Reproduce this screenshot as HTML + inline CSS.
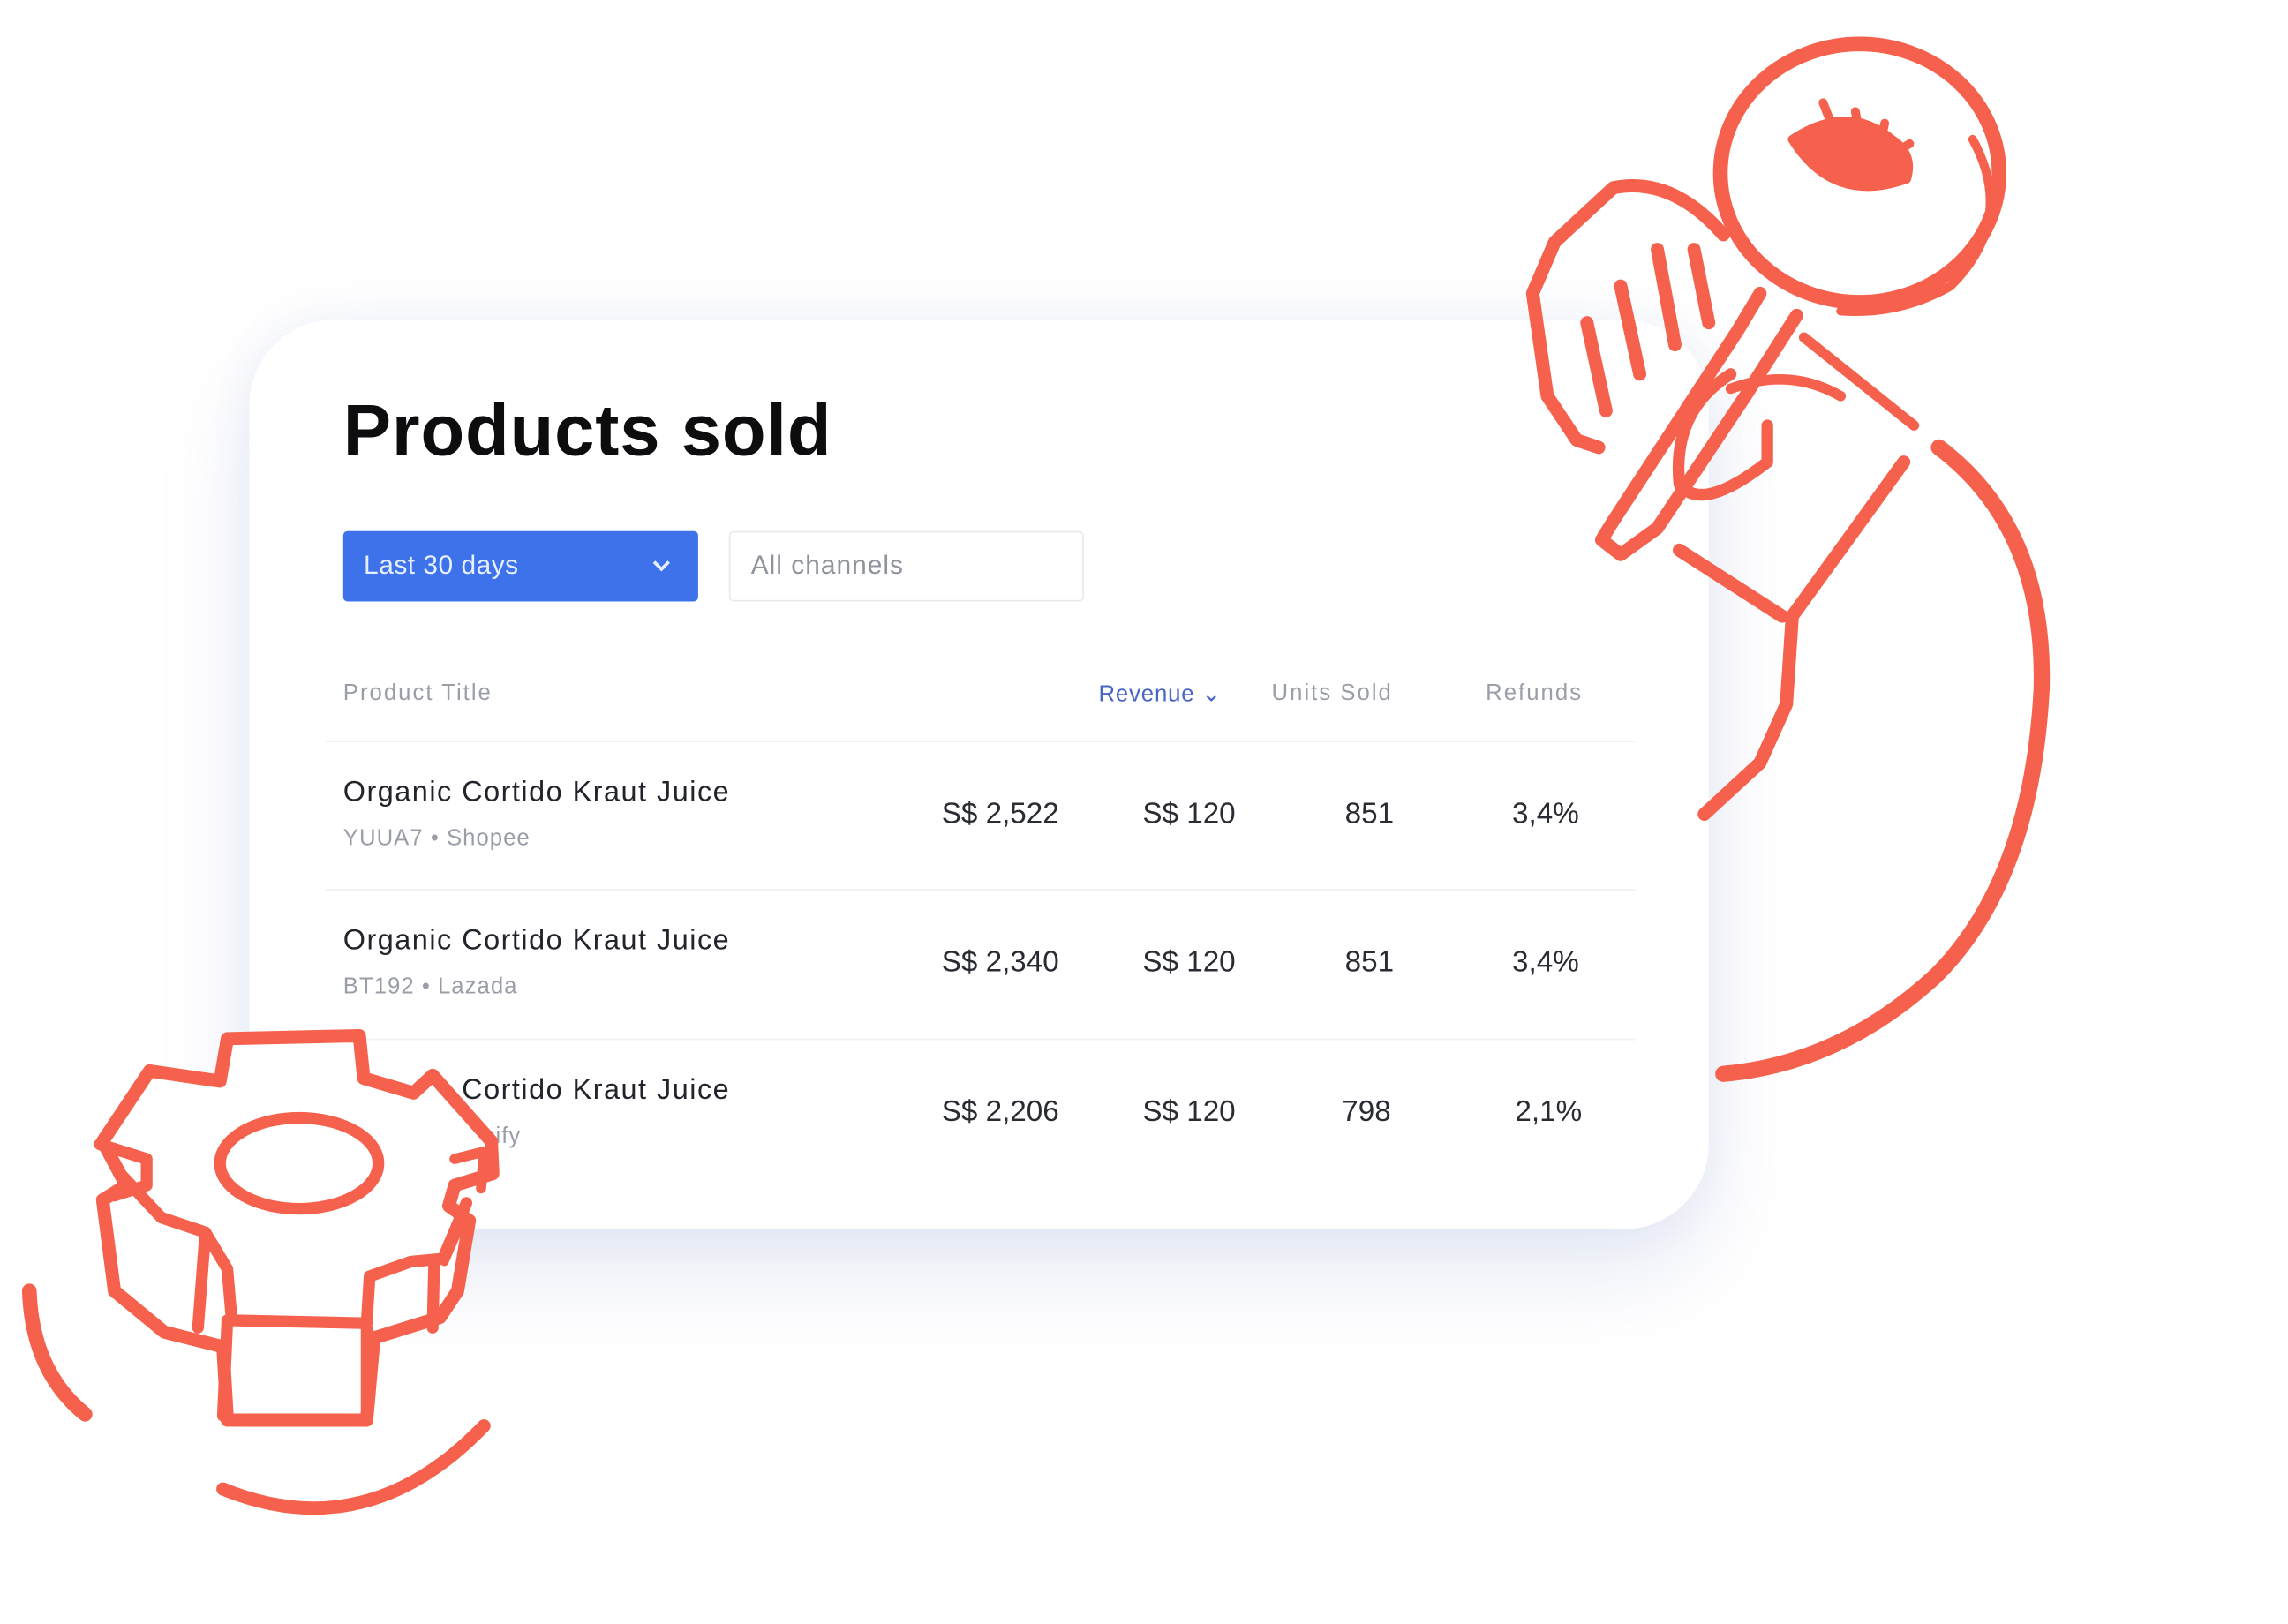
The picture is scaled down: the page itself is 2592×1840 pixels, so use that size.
<!DOCTYPE html>
<html><head><meta charset="utf-8"><style>
html,body{margin:0;padding:0;background:#fff;width:2592px;height:1840px;overflow:hidden}
#w{position:absolute;left:0;top:0;width:1560px;height:1107px;transform:scale(1.66154,1.66215);transform-origin:0 0;font-family:"Liberation Sans",sans-serif}
.card{position:absolute;left:170px;top:218px;width:995px;height:620px;background:#fff;border-radius:58px;box-shadow:0 30px 60px rgba(120,140,200,.18),0 0 30px rgba(150,165,210,.12)}
.t{position:absolute;white-space:nowrap}
.h{font-size:15.5px;color:#9a9ea8;letter-spacing:1.2px}
.n{font-size:20px;color:#2a2c33}
.p{font-size:19.5px;color:#22242b;letter-spacing:0.9px}
.s{font-size:15.5px;color:#9a9ea8;letter-spacing:0.6px}
.line{position:absolute;left:222px;width:893px;height:1px;background:#eef0f4}
svg{position:absolute;left:0;top:0}
</style></head><body><div id="w">
<div class="card"></div>
<div class="t" style="left:234px;top:266px;font-size:49px;font-weight:bold;color:#0d0d0f;letter-spacing:0.5px">Products sold</div>
<div style="position:absolute;left:234px;top:362px;width:242px;height:48px;background:#3e72ea;border-radius:3px"></div>
<div class="t" style="left:248px;top:375px;font-size:18px;color:#e6efff;letter-spacing:0.3px">Last 30 days</div>
<svg width="1560" height="1107" style="pointer-events:none"><path d="M446 383l5 5 5-5" stroke="#e6efff" stroke-width="2.2" fill="none"/><path d="M709 383l5 5 5-5" stroke="#9a9ea8" stroke-width="1.5" fill="none"/></svg>
<div style="position:absolute;left:497px;top:362px;width:240px;height:46px;border:1px solid #e7e9ee;border-radius:3px;background:#fff"></div>
<div class="t" style="left:512px;top:375px;font-size:18px;color:#8f939c;letter-spacing:0.6px">All channels</div>
<div class="t h" style="left:234px;top:464px">Product Title</div>
<div class="t h" style="left:749px;top:464px;color:#4a66c4;letter-spacing:0.5px">Revenue ⌄</div>
<div class="t h" style="left:867px;top:464px">Units Sold</div>
<div class="t h" style="left:1013px;top:464px">Refunds</div>
<div class="line" style="top:505px"></div>
<div class="line" style="top:606px"></div>
<div class="line" style="top:708px"></div>

<div class="t p" style="left:234px;top:529px">Organic Cortido Kraut Juice</div>
<div class="t s" style="left:234px;top:563px">YUUA7 • Shopee</div>
<div class="t n" style="left:642px;top:544px">S$ 2,522</div>
<div class="t n" style="left:779px;top:544px">S$ 120</div>
<div class="t n" style="left:917px;top:544px">851</div>
<div class="t n" style="left:1031px;top:544px">3,4%</div>

<div class="t p" style="left:234px;top:630px">Organic Cortido Kraut Juice</div>
<div class="t s" style="left:234px;top:664px">BT192 • Lazada</div>
<div class="t n" style="left:642px;top:645px">S$ 2,340</div>
<div class="t n" style="left:779px;top:645px">S$ 120</div>
<div class="t n" style="left:917px;top:645px">851</div>
<div class="t n" style="left:1031px;top:645px">3,4%</div>

<div class="t p" style="left:234px;top:732px">Organic Cortido Kraut Juice</div>
<div class="t s" style="left:234px;top:766px">TR891 • Shopify</div>
<div class="t n" style="left:642px;top:747px">S$ 2,206</div>
<div class="t n" style="left:779px;top:747px">S$ 120</div>
<div class="t n" style="left:915px;top:747px">798</div>
<div class="t n" style="left:1033px;top:747px">2,1%</div>

<svg width="1560" height="1107" fill="none" stroke="#f5614c" stroke-linecap="round" stroke-linejoin="round">
<path d="M155 708 L245 706 L248 735 L282 745 L295 733 L335 778 L336 800 L310 808 L306 822 L320 832 L312 880 L300 898 L255 912 L250 968 L155 968 L152 918 L112 908 L78 880 L70 818 L86 808 L70 778 L102 730 L150 737 Z" fill="#fff" stroke-width="9"/>
<path d="M68 780 L100 790 L100 808 L78 815" stroke-width="8"/>
<path d="M310 790 L330 785 L328 810" stroke-width="7"/>
<path d="M82 800 L110 830 L140 840 L155 865 L158 900 L250 902 L252 870 L280 860 L302 858 L318 820" stroke-width="8"/>
<path d="M140 840 L135 905 M155 900 L152 965 M250 905 L250 965 M296 862 L295 905" stroke-width="8"/>
<path d="M303 860 L316 830" stroke-width="6"/>
<ellipse cx="204" cy="793" rx="54" ry="31" stroke-width="8"/>
<path d="M20 880 Q22 935 58 964" stroke-width="10"/>
<path d="M152 1015 Q250 1055 330 972" stroke-width="9"/>
<ellipse cx="1268" cy="118" rx="95" ry="88" stroke-width="10"/>
<path d="M1345 95 Q1375 150 1330 195 Q1295 215 1255 212" stroke-width="6"/>
<path d="M1222 95 Q1250 140 1300 122 Q1305 105 1290 95 Q1260 70 1222 95 Z" fill="#f5614c" stroke-width="6"/>
<path d="M1243 70 L1250 88 M1265 76 L1268 92 M1285 84 L1282 98 M1302 98 L1292 104" stroke-width="6"/>
<path d="M1200 200 L1185 225 L1100 355 L1092 368 L1105 378 L1130 360 L1190 270 L1225 215" stroke-width="9"/>
<path d="M1175 160 Q1140 120 1100 128 L1060 165 L1045 200 L1055 270 L1075 300 L1090 305" stroke-width="9"/>
<path d="M1082 220 L1095 280 M1105 195 L1118 255 M1130 170 L1142 235 M1155 170 L1165 220" stroke-width="9"/>
<path d="M1180 255 Q1140 280 1145 330 Q1160 350 1205 315 L1205 290" stroke-width="8"/>
<path d="M1180 265 Q1220 250 1255 270" stroke-width="7"/>
<path d="M1230 230 L1305 290" stroke-width="7"/>
<path d="M1145 375 L1215 420 M1298 315 L1222 420 L1218 480 L1200 520 L1162 555" stroke-width="9"/>
<path d="M1322 305 Q1395 360 1392 470 Q1385 600 1320 665 Q1255 725 1175 732" stroke-width="11"/>
</svg>
</div></body></html>
